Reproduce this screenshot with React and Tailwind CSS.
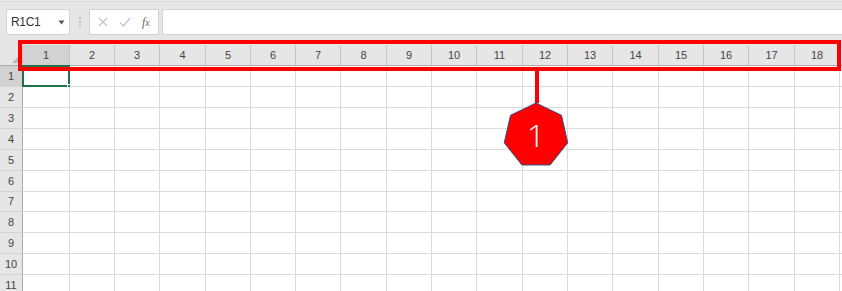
import React from "react";

const colWidths = [47, 45, 45, 46, 45, 45, 45, 46, 45, 45, 46, 45, 45, 46, 45, 45, 46, 45, 40];
const rowHeights = [21, 21, 21, 21, 21, 21, 20, 21, 21, 21, 21];

function Heptagon() {
  const R = 32.6;
  const cx = 36;
  const cy = 35.6;
  const pts = [];
  for (let k = 0; k < 7; k++) {
    const a = (-90 + (k * 360) / 7) * (Math.PI / 180);
    pts.push(`${(cx + R * Math.cos(a)).toFixed(2)},${(cy + R * Math.sin(a)).toFixed(2)}`);
  }
  return (
    <svg width="72" height="70" viewBox="0 0 72 70">
      <polygon points={pts.join(" ")} fill="#ff0000" stroke="#2f528f" strokeWidth="1" />
      <text
        x="36"
        y="47"
        textAnchor="middle"
        fill="#ffffff"
        fontSize="32"
        fontFamily="'Open Sans', 'Liberation Sans', sans-serif"
        fontWeight="300"
      >
        1
      </text>
    </svg>
  );
}

export default function App() {
  return (
    <div
      className="relative w-[842px] h-[291px] overflow-hidden bg-[#e6e6e6]"
      style={{ fontFamily: "'Liberation Sans', Arial, sans-serif" }}
    >
      {/* top line */}
      <div className="h-[2px] bg-[#e9e9e9] border-b border-[#d6d6d6]" />
      {/* formula bar */}
      <div className="flex items-stretch h-[26px] mt-[7px] ml-[6px]">
        <div className="w-[64px] bg-white border border-[#d4d4d4] flex items-center justify-between pl-[4px] pr-[4px]">
          <span className="text-[12px] text-[#333] tracking-[-0.3px]">R1C1</span>
          <svg width="7" height="5" viewBox="0 0 7 5">
            <polygon points="0.5,0.5 6.5,0.5 3.5,4.5" fill="#555" />
          </svg>
        </div>
        <div className="w-[19px] flex items-center justify-center">
          <div className="flex flex-col gap-[2px]">
            <div className="w-[2px] h-[2px] bg-[#c2c2c2]" />
            <div className="w-[2px] h-[2px] bg-[#c2c2c2]" />
            <div className="w-[2px] h-[2px] bg-[#c2c2c2]" />
          </div>
        </div>
        <div className="w-[70px] bg-white border border-[#d4d4d4] flex items-center pl-[7px]">
          <svg width="10" height="10" viewBox="0 0 10 10" className="ml-[1px]">
            <path d="M1 1 L9 9 M9 1 L1 9" stroke="#c4c4c4" strokeWidth="1.2" fill="none" />
          </svg>
          <svg width="12" height="10" viewBox="0 0 12 10" className="ml-[11px]">
            <path d="M1 5.5 L4.5 9 L11 1" stroke="#c4c4c4" strokeWidth="1.3" fill="none" />
          </svg>
          <span
            className="ml-[11px] text-[12px] italic text-[#666]"
            style={{ fontFamily: "'Liberation Serif', serif" }}
          >
            f<span className="text-[10px]">x</span>
          </span>
        </div>
        <div className="flex-1 ml-[3px] bg-white border border-[#d4d4d4] border-r-0" />
      </div>
      {/* grid */}
      <div className="mt-[10px]">
        {/* header row */}
        <div className="flex h-[21px]">
          <div className="w-[23px] shrink-0 relative bg-[#e6e6e6] border-r border-[#c8c8c8] border-b border-b-[#ababab]">
            <svg width="8" height="8" viewBox="0 0 8 8" className="absolute right-[2px] bottom-[2px]">
              <polygon points="8,0 8,8 0,8" fill="#b7b7b7" />
            </svg>
          </div>
          {colWidths.map((w, i) => (
            <div
              key={i}
              style={{ width: w }}
              className={`shrink-0 flex items-center justify-center text-[11px] text-[#444] border-r border-[#c4c4c4] border-b border-b-[#ababab] ${
                i === 0 ? "bg-[#d2d2d2]" : "bg-[#e6e6e6]"
              }`}
            >
              {i < 18 ? i + 1 : ""}
            </div>
          ))}
        </div>
        {/* rows */}
        {rowHeights.map((h, r) => (
          <div key={r} className="flex" style={{ height: h }}>
            <div
              className={`w-[23px] shrink-0 flex items-center justify-center text-[11px] text-[#444] border-r border-[#ababab] border-b border-b-[#d4d4d4] ${
                r === 0 ? "bg-[#d2d2d2]" : "bg-[#e6e6e6]"
              }`}
            >
              {r + 1}
            </div>
            {colWidths.map((w, i) => (
              <div
                key={i}
                style={{ width: w }}
                className="shrink-0 bg-white border-r border-b border-[#dadada] relative"
              >
                {r === 0 && i === 0 && (
                  <>
                    <div className="absolute left-[-1px] top-[-1px] right-[-1px] bottom-[-1px] border-2 border-[#217346]" />
                    <div className="absolute right-[-3px] bottom-[-3px] w-[5px] h-[5px] bg-[#217346] border border-white" />
                  </>
                )}
              </div>
            ))}
          </div>
        ))}
      </div>
      {/* red annotation rectangle */}
      <div className="absolute left-[18px] top-[40px] w-[823px] h-[31px] border-[4px] border-[#ff0000]" />
      {/* connector line */}
      <div className="absolute left-[535px] top-[71px] w-[4px] h-[32px] bg-[#ff0000]" />
      {/* heptagon callout */}
      <div className="absolute left-[500px] top-[100px]">
        <Heptagon />
      </div>
    </div>
  );
}
